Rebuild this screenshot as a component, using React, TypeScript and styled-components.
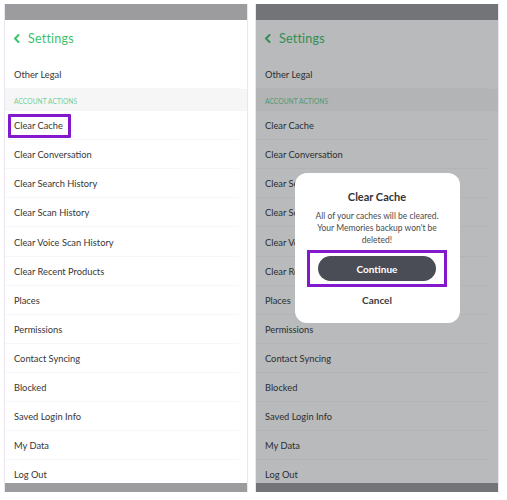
import React from 'react'
import { styled, createGlobalStyle } from 'styled-components'

const GlobalStyle = createGlobalStyle`
  body {
    margin: 0;
    background: #ffffff;
    font-family: Lato, "Noto Sans", sans-serif;
  }
`

const Page = styled.div`
  display: flex;
  gap: 7px;
  padding: 4px 0 0 4px;
`

const Phone = styled.div`
  position: relative;
  width: 244px;
  height: 488px;
  display: flex;
  flex-direction: column;
  box-sizing: border-box;
  border-left: 1px solid #ece4f1;
  border-right: 1px solid #ece4f1;
  background: #ffffff;
  overflow: hidden;
`

const StatusBar = styled.div`
  height: 16px;
  flex: none;
  background: #9c9b9d;
`

const Content = styled.div`
  flex: 1;
  min-height: 0;
  overflow: hidden;
`

const BottomBar = styled.div`
  height: 9px;
  flex: none;
  background: #9c9b9d;
`

const Header = styled.div`
  height: 40px;
  display: flex;
  align-items: center;
  gap: 8px;
  padding: 0 0 4px 8px;
  box-sizing: border-box;
  color: #3cc26b;
  font-size: 12.5px;
  letter-spacing: 0.2px;
`

const Row = styled.div`
  height: 29.1px;
  display: flex;
  align-items: center;
  padding: 2px 0 0 9px;
  margin-right: 8px;
  box-sizing: border-box;
  border-bottom: 1px solid #f7f7f7;
  font-size: 9.3px;
  color: #363636;
`

const Label = styled.span<{ $marked?: boolean }>`
  display: inline-block;
  line-height: 12px;
  ${(p) =>
    p.$marked &&
    `
    border: 3px solid #8418cc;
    border-radius: 1px;
    padding: 3px 5px 3px 3px;
    margin-left: -6px;
  `}
`

const Section = styled.div`
  height: 22px;
  display: flex;
  align-items: center;
  padding: 1px 0 0 9px;
  box-sizing: border-box;
  background: #f6f6f7;
  color: #6fd193;
  font-size: 6.6px;
  letter-spacing: 0.1px;
`

const Overlay = styled.div`
  position: absolute;
  inset: 0;
  background: rgba(20, 25, 32, 0.3);
  display: flex;
  align-items: center;
  justify-content: center;
`

const Dialog = styled.div`
  width: 165px;
  height: 150px;
  box-sizing: border-box;
  background: #ffffff;
  border-radius: 12px;
  padding-top: 16px;
  display: flex;
  flex-direction: column;
  align-items: center;
  text-align: center;
`

const DialogTitle = styled.div`
  font-size: 11px;
  line-height: 16px;
  font-weight: 700;
  color: #333335;
`

const DialogText = styled.div`
  margin-top: 5px;
  font-size: 8.5px;
  line-height: 12px;
  color: #4a4a4c;
  padding: 0 12px;
`

const Marker = styled.div`
  margin-top: 4px;
  border: 3px solid #8418cc;
  padding: 3px 8px;
`

const ContinueButton = styled.div`
  width: 118px;
  height: 25px;
  border-radius: 13px;
  background: #4a4d55;
  color: #ffffff;
  font-size: 10px;
  font-weight: 700;
  display: flex;
  align-items: center;
  justify-content: center;
`

const CancelButton = styled.div`
  margin-top: 6px;
  line-height: 14px;
  font-size: 10px;
  font-weight: 700;
  color: #3c3c3e;
`

const items = [
  'Clear Conversation',
  'Clear Search History',
  'Clear Scan History',
  'Clear Voice Scan History',
  'Clear Recent Products',
  'Places',
  'Permissions',
  'Contact Syncing',
  'Blocked',
  'Saved Login Info',
  'My Data',
  'Log Out',
]

const Chevron = () => (
  <svg width="7" height="9" viewBox="0 0 7 9">
    <polyline points="5.5,1 2,4.5 5.5,8" fill="none" stroke="currentColor" strokeWidth="2" strokeLinecap="round" strokeLinejoin="round" />
  </svg>
)

const SettingsList = ({ marked }: { marked: boolean }) => (
  <Content>
    <Header>
      <Chevron />
      <span>Settings</span>
    </Header>
    <Row><Label>Other Legal</Label></Row>
    <Section>ACCOUNT ACTIONS</Section>
    <Row><Label $marked={marked}>Clear Cache</Label></Row>
    {items.map((item) => (
      <Row key={item}><Label>{item}</Label></Row>
    ))}
  </Content>
)

const App = () => {
  return (
    <>
      <GlobalStyle />
      <Page>
        <Phone>
          <StatusBar />
          <SettingsList marked />
          <BottomBar />
        </Phone>
        <Phone>
          <StatusBar />
          <SettingsList marked={false} />
          <BottomBar />
          <Overlay>
            <Dialog>
              <DialogTitle>Clear Cache</DialogTitle>
              <DialogText>
                All of your caches will be cleared.
                <br />
                Your Memories backup won't be deleted!
              </DialogText>
              <Marker>
                <ContinueButton>Continue</ContinueButton>
              </Marker>
              <CancelButton>Cancel</CancelButton>
            </Dialog>
          </Overlay>
        </Phone>
      </Page>
    </>
  )
}

export default App
